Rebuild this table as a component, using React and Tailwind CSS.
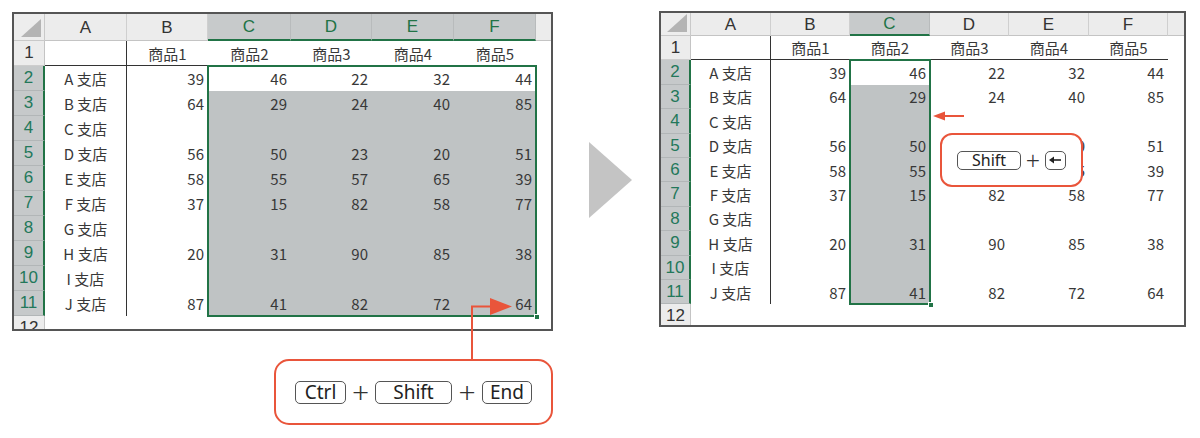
import React from "react";

const DATA = [
  ["A 支店", 39, 46, 22, 32, 44],
  ["B 支店", 64, 29, 24, 40, 85],
  ["C 支店", "", "", "", "", ""],
  ["D 支店", 56, 50, 23, 20, 51],
  ["E 支店", 58, 55, 57, 65, 39],
  ["F 支店", 37, 15, 82, 58, 77],
  ["G 支店", "", "", "", "", ""],
  ["H 支店", 20, 31, 90, 85, 38],
  ["I 支店", "", "", "", "", ""],
  ["J 支店", 87, 41, 82, 72, 64],
];
const LETTERS = ["A", "B", "C", "D", "E", "F"];
const CJK = { fontFamily: "'Noto Sans CJK JP', 'Noto Sans', sans-serif" };

function Corner() {
  return (
    <div className="bg-[#ededed] border-r border-b border-[#c9c9c9] flex items-end justify-end pr-[3px] pb-[3px]">
      <svg width="20" height="18" viewBox="0 0 20 18">
        <polygon points="20,0 20,18 0,18" fill="#b4b4b4" />
      </svg>
    </div>
  );
}

function Sheet({ boxClass, gridClass, selCols, selBoxClass }) {
  const cells = [];
  cells.push(<Corner key="corner" />);
  LETTERS.forEach((l, i) => {
    const sel = selCols.includes(i);
    cells.push(
      <div
        key={"h" + l}
        className={
          sel
            ? "bg-[#c7cacb] text-[#217346] border-r border-[#b8bbbc] border-b-2 border-b-[#217346] flex items-center justify-center text-[17px] leading-none"
            : "bg-[#ececec] text-[#333] border-r border-[#cfcfcf] border-b border-b-[#c4c4c4] flex items-center justify-center text-[17px] leading-none"
        }
        style={{ fontFamily: "'Liberation Sans', Arial, sans-serif" }}
      >
        {l}
      </div>
    );
  });
  cells.push(<div key="hx" className="bg-[#ececec] border-b border-[#c4c4c4]" />);

  for (let r = 1; r <= 12; r++) {
    const rowSel = r >= 2 && r <= 11;
    cells.push(
      <div
        key={"r" + r}
        className={
          rowSel
            ? "bg-[#c6c9ca] text-[#23785a] border-b border-[#b2b6b7] border-r-2 border-r-[#217346] flex items-start justify-center pt-[2px] text-[17px] leading-[20px] overflow-hidden"
            : "bg-[#ececec] text-[#333] border-b border-[#cdcdcd] border-r border-r-[#c4c4c4] flex items-start justify-center pt-[2px] text-[17px] leading-[20px] overflow-hidden"
        }
        style={{ fontFamily: "'Liberation Sans', Arial, sans-serif" }}
      >
        {r}
      </div>
    );
    for (let c = 0; c < 6; c++) {
      let content = "";
      let cls = "flex items-center text-[15px] leading-none text-[#383838] ";
      if (r === 1) {
        content = c === 0 ? "" : "商品" + c;
        cls += "justify-center border-b border-[#333] ";
        if (c === 0) cls += "border-r ";
      } else if (rowSel) {
        const row = DATA[r - 2];
        content = row[c];
        if (c === 0) {
          cls += "justify-center border-r border-[#333] ";
        } else {
          cls += "justify-end pr-[4px] ";
          if (selCols.includes(c) && r !== 2) cls += "bg-[#bfc3c4] ";
        }
      }
      cells.push(
        <div key={"c" + r + "-" + c} className={cls} style={CJK}>
          {content}
        </div>
      );
    }
    cells.push(<div key={"x" + r} />);
  }

  return (
    <div className={boxClass}>
      <div className={gridClass}>
        {cells}
        <div className={selBoxClass}>
          <div className="absolute right-[-5px] bottom-[-5px] w-[6px] h-[6px] bg-[#217346] border border-white" />
        </div>
      </div>
    </div>
  );
}

function Key({ className, children }) {
  return (
    <div
      className={
        "border-[1.5px] border-[#555] rounded-[5px] flex items-center justify-center text-[#222] leading-none bg-white " +
        className
      }
      style={{ fontFamily: "'Noto Sans', 'Open Sans', sans-serif" }}
    >
      {children}
    </div>
  );
}

function Plus({ className }) {
  return (
    <div
      className={"flex items-center justify-center text-[#333] leading-none font-light " + className}
      style={{ fontFamily: "'Noto Sans', sans-serif" }}
    >
      +
    </div>
  );
}

export default function App() {
  return (
    <div className="relative w-[1200px] h-[438px] bg-white overflow-hidden flex items-start">
      <Sheet
        boxClass="ml-[12px] mt-[12px] w-[541px] h-[319px] shrink-0 border-2 border-[#555] overflow-hidden bg-white"
        gridClass="relative grid grid-cols-[31px_82px_81px_83px_81px_82px_82px_15px] grid-rows-[27px_repeat(12,25px)]"
        selCols={[2, 3, 4, 5]}
        selBoxClass="absolute left-[193px] top-[51px] w-[330px] h-[252px] border-2 border-[#217346] pointer-events-none"
      />

      <svg className="ml-[36px] mt-[142px] shrink-0" width="43" height="76" viewBox="0 0 43 76">
        <polygon points="0,0 43,38 0,76" fill="#c4c4c4" />
      </svg>

      <Sheet
        boxClass="ml-[27px] mt-[11px] w-[527px] h-[316px] shrink-0 border-2 border-[#555] overflow-hidden bg-white"
        gridClass="relative grid grid-cols-[30px_80px_79px_80px_79px_80px_79px_16px] grid-rows-[23px_repeat(12,24.4px)]"
        selCols={[2]}
        selBoxClass="absolute left-[188px] top-[46.4px] w-[82px] h-[246px] border-2 border-[#217346] pointer-events-none"
      />

      <svg className="absolute left-[465px] top-[295px]" width="50" height="66" viewBox="0 0 50 66">
        <polyline points="7,66 7,11.5 27,11.5" fill="none" stroke="#e9553b" strokeWidth="2" />
        <polygon points="25,3 47,11.5 25,20" fill="#e9553b" />
      </svg>

      <div className="absolute left-[274px] top-[359px] w-[279px] h-[66px] border-2 border-[#e9553b] rounded-[15px] bg-white flex items-center pl-[19px]">
        <Key className="w-[51px] h-[23px] text-[19px]">Ctrl</Key>
        <Plus className="w-[29px] text-[30px]" />
        <Key className="w-[77px] h-[23px] text-[19px]">Shift</Key>
        <Plus className="w-[30px] text-[30px]" />
        <Key className="w-[50px] h-[23px] text-[19px]">End</Key>
      </div>

      <svg className="absolute left-[932px] top-[110px]" width="34" height="12" viewBox="0 0 34 12">
        <polygon points="1,6 13,1.5 13,10.5" fill="#e9553b" />
        <line x1="12" y1="6" x2="32" y2="6" stroke="#e9553b" strokeWidth="2" />
      </svg>

      <div className="absolute left-[940px] top-[133px] w-[143px] h-[54px] border-2 border-[#e9553b] rounded-[12px] bg-white flex items-center pl-[15px]">
        <Key className="w-[64px] h-[19px] text-[16px]">Shift</Key>
        <Plus className="w-[24px] text-[25px]" />
        <Key className="w-[21px] h-[19px]">
          <svg width="15" height="10" viewBox="0 0 15 10">
            <polygon points="1,5 6,1.5 6,8.5" fill="#222" />
            <line x1="5" y1="5" x2="13" y2="5" stroke="#222" strokeWidth="1.6" />
          </svg>
        </Key>
      </div>
    </div>
  );
}
